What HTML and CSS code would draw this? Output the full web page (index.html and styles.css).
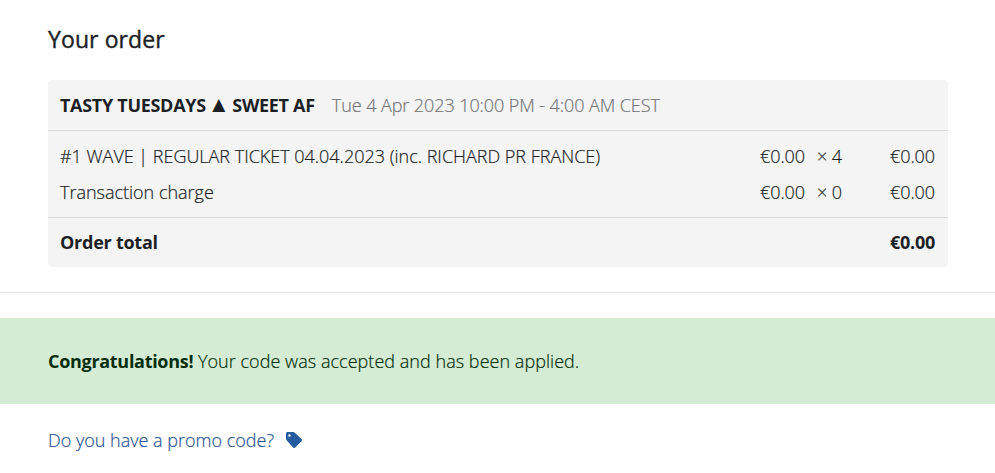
FILE: index.html
```
<!DOCTYPE html>
<html lang="en">

<head>
    <meta charset="UTF-8">
    <meta name="viewport" content="width=device-width, initial-scale=1.0">
    <title>Your order</title>
    <link rel="stylesheet" href="styles.css">
</head>

<body>
    <section class="order">
        <h1>Your order</h1>
        <div class="summary">
            <div class="event">
                <strong>TASTY TUESDAYS <span class="triangle">▲</span> SWEET AF</strong>
                <span class="date">Tue 4 Apr 2023 10:00 PM - 4:00 AM CEST</span>
            </div>
            <div class="items">
                <div class="row">
                    <span class="name">#1 WAVE | REGULAR TICKET 04.04.2023 (inc. RICHARD PR FRANCE)</span>
                    <span class="price">€0.00</span>
                    <span class="qty">× 4</span>
                    <span class="sum">€0.00</span>
                </div>
                <div class="row">
                    <span class="name">Transaction charge</span>
                    <span class="price">€0.00</span>
                    <span class="qty">× 0</span>
                    <span class="sum">€0.00</span>
                </div>
            </div>
            <div class="total">
                <span>Order total</span>
                <span>€0.00</span>
            </div>
        </div>
    </section>
    <div class="alert">
        <p><strong>Congratulations!</strong> Your code was accepted and has been applied.</p>
    </div>
    <a class="promo" href="#">
        <span>Do you have a promo code?</span>
        <svg class="tag" viewBox="0 0 512 512">
            <path fill="currentColor" d="M0 222V48C0 21 21 0 48 0h190a48 48 0 0 1 34 14l226 212a48 48 0 0 1 0 68L294 498a48 48 0 0 1-68 0L14 256A48 48 0 0 1 0 222zM112 72a40 40 0 1 0 0 80 40 40 0 0 0 0-80z" />
        </svg>
    </a>
</body>

</html>
```
FILE: styles.css
```
* {
    padding: 0;
    margin: 0;
    box-sizing: border-box;
}

body {
    background: #fff;
    color: #1d1f27;
    font-family: "Open Sans", "DejaVu Sans", sans-serif;
    font-size: 18px;
    font-weight: 300;
    line-height: 26px;
    -webkit-text-stroke: 0.2px;
}

.order {
    padding: 23px 47px 25px 48px;
    border-bottom: 1px solid #e6e6e6;
}

h1 {
    font-size: 23px;
    font-weight: 400;
    line-height: 32px;
    margin-bottom: 25px;
    letter-spacing: 0.1px;
    -webkit-text-stroke: 0.4px;
}

strong {
    font-weight: 700;
    letter-spacing: -0.3px;
    -webkit-text-stroke: 0;
}

.summary {
    background: #f4f4f4;
    border-radius: 4px;
}

.event {
    display: flex;
    gap: 17px;
    height: 51px;
    padding: 12px;
    border-bottom: 1px solid #dcdcdc;
}

.date {
    color: #76767a;
    letter-spacing: -0.08px;
}

.triangle {
    font-family: "DejaVu Sans", sans-serif;
    font-size: 17px;
    line-height: 1;
    vertical-align: 2px;
    margin: 0 3px 0 2px;
}

.items {
    padding: 7px 12px;
    border-bottom: 1px solid #dcdcdc;
}

.row {
    display: grid;
    grid-template-columns: 1fr 50px 37px 93px;
    padding-right: 1px;
    height: 36px;
    align-items: center;
}

.name {
    letter-spacing: -0.01px;
}

.price,
.qty,
.sum {
    text-align: right;
    letter-spacing: -0.08px;
}

.total {
    display: flex;
    justify-content: space-between;
    padding: 11px 13px 12px 12px;
    font-weight: 700;
    letter-spacing: -0.25px;
    -webkit-text-stroke: 0;
}

.alert {
    margin-top: 25px;
    padding: 30px 48px;
    background: #d4ecd4;
    color: #062e0c;
}

.alert p {
    letter-spacing: 0.04px;
}

.promo {
    display: inline-flex;
    align-items: center;
    gap: 12px;
    margin: 23px 48px;
    color: #2a5591;
    text-decoration: none;
}

.tag {
    width: 16px;
    height: 16px;
    color: #235c9f;
}
```
